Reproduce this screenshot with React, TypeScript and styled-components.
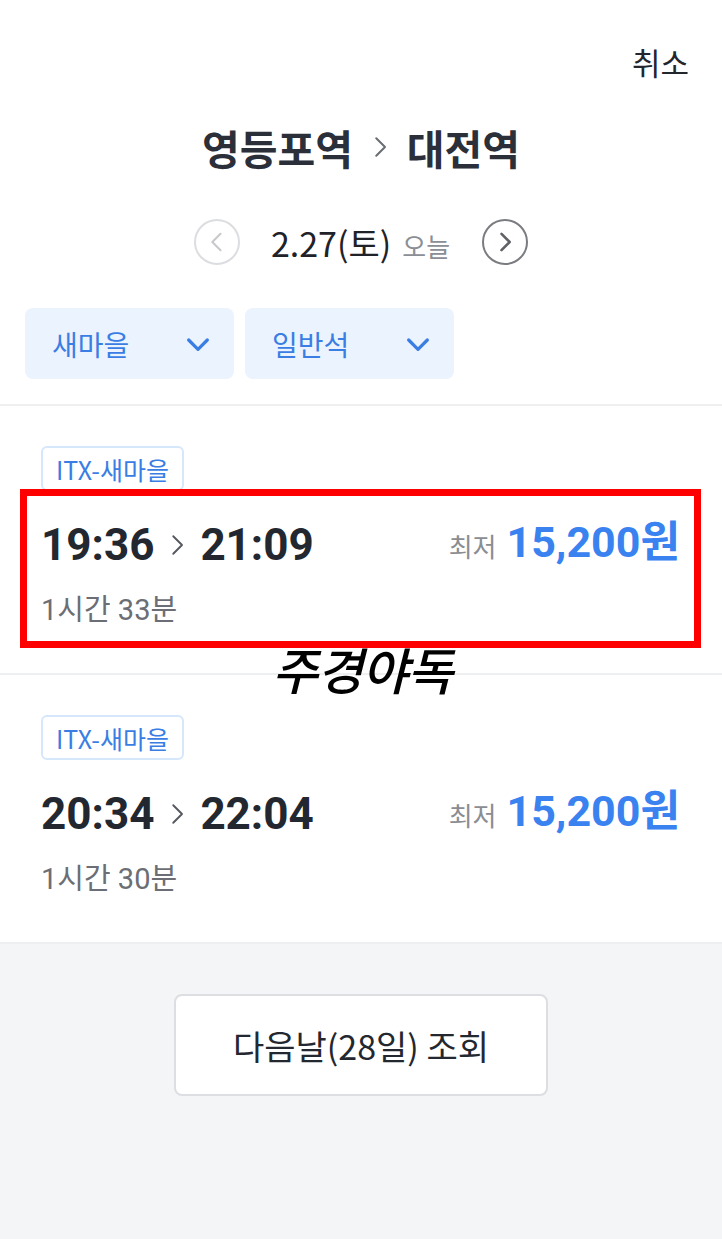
import { FC } from 'react';
import styled, { createGlobalStyle } from 'styled-components';

const GlobalStyle = createGlobalStyle`
  body {
    margin: 0;
    background: #ffffff;
    font-family: 'Noto Sans CJK KR', 'Noto Sans', sans-serif;
    color: #23272f;
  }
`;

type Train = {
  id: string;
  kind: string;
  depart: string;
  arrive: string;
  duration: string;
  price: string;
};

const trains: Train[] = [
  { id: 'a', kind: 'ITX-새마을', depart: '19:36', arrive: '21:09', duration: '1시간 33분', price: '15,200' },
  { id: 'b', kind: 'ITX-새마을', depart: '20:34', arrive: '22:04', duration: '1시간 30분', price: '15,200' },
];

const Page = styled.div`
  width: 722px;
  min-height: 1239px;
  display: flex;
  flex-direction: column;
  background: #ffffff;
`;

const TopBar = styled.div`
  display: flex;
  justify-content: flex-end;
  padding: 42px 33px 0 0;
`;

const CancelButton = styled.button`
  border: none;
  background: none;
  padding: 0;
  font-family: inherit;
  font-size: 31px;
  line-height: 40px;
  color: #23262d;
`;

const Route = styled.h1`
  margin: 37px 0 0;
  display: flex;
  align-items: center;
  justify-content: center;
  gap: 12px;
  font-size: 41px;
  line-height: 56px;
  font-weight: 700;
  color: #2a2f3a;
`;

const DateNav = styled.div`
  margin-top: 44px;
  height: 46px;
  display: flex;
  align-items: center;
  justify-content: center;
`;

const CircleButton = styled.button<{ $active: boolean }>`
  width: 46px;
  height: 46px;
  border-radius: 50%;
  border: 2px solid ${p => (p.$active ? '#7a7c80' : '#dcdde0')};
  background: #ffffff;
  display: flex;
  align-items: center;
  justify-content: center;
  padding: 0;
`;

const DateText = styled.div`
  margin: 0 32px 0 31px;
  display: flex;
  align-items: baseline;
  gap: 11px;
`;

const DateMain = styled.span`
  font-size: 34px;
  color: #1f2228;
`;

const Today = styled.span`
  font-size: 26px;
  color: #8b8e94;
`;

const Filters = styled.div`
  margin-top: 43px;
  padding: 0 25px;
  display: flex;
  gap: 11px;
`;

const Select = styled.button`
  width: 209px;
  height: 71px;
  border: none;
  border-radius: 8px;
  background: #ebf3fe;
  display: flex;
  align-items: center;
  justify-content: space-between;
  padding: 0 20px 0 27px;
  font-family: inherit;
  font-size: 28px;
  color: #3a7ee4;
`;

const ResultList = styled.div`
  margin-top: 25px;
  border-top: 2px solid #eeeff1;
`;

const Card = styled.div`
  position: relative;
  height: 269px;
  box-sizing: border-box;
  padding: 40px 42px 0 41px;
  border-bottom: 2px solid #eeeff1;
`;

const Tag = styled.span`
  display: inline-flex;
  align-items: center;
  height: 45px;
  box-sizing: border-box;
  padding: 0 13px;
  border: 2px solid #d6e6fb;
  border-radius: 6px;
  font-size: 25px;
  color: #3a7ee4;
`;

const Row = styled.div`
  margin-top: 29px;
  height: 50px;
  display: flex;
  align-items: center;
  justify-content: space-between;
`;

const Times = styled.div`
  display: flex;
  align-items: center;
  gap: 8px;
  font-family: Roboto, 'Noto Sans CJK KR', sans-serif;
  font-size: 44px;
  font-weight: 700;
  color: #23272f;
`;

const Price = styled.div`
  display: flex;
  align-items: baseline;
  gap: 10px;
  margin-bottom: 14px;
`;

const PriceLabel = styled.span`
  font-size: 26px;
  color: #8a8d92;
`;

const PriceValue = styled.span`
  font-family: Roboto, 'Noto Sans CJK KR', sans-serif;
  font-size: 43px;
  font-weight: 700;
  color: #3a82f0;
`;

const Duration = styled.div`
  margin-top: 23px;
  font-family: Roboto, 'Noto Sans CJK KR', sans-serif;
  font-size: 29px;
  line-height: 34px;
  color: #6b6e74;
`;

const Highlight = styled.div`
  position: absolute;
  top: 83px;
  left: 20px;
  width: 681px;
  height: 159px;
  box-sizing: border-box;
  border: 7px solid #ff0000;
  pointer-events: none;
`;

const Note = styled.div`
  position: absolute;
  top: 232px;
  left: 272px;
  z-index: 2;
  font-size: 50px;
  line-height: 60px;
  font-style: italic;
  font-weight: 500;
  letter-spacing: -1px;
  color: #000000;
`;

const Footer = styled.div`
  flex: 1;
  background: #f4f5f7;
  display: flex;
  justify-content: center;
  padding-top: 50px;
`;

const NextDayButton = styled.button`
  width: 374px;
  height: 102px;
  border: 2px solid #dcdee2;
  border-radius: 8px;
  background: #ffffff;
  font-family: inherit;
  font-size: 34px;
  color: #23272f;
`;

const Chevron: FC<{ dir: 'left' | 'right' | 'down'; size: number; color: string; width?: number }> = ({
  dir,
  size,
  color,
  width = 2,
}) => {
  const d =
    dir === 'left' ? 'M15 5 L8 12 L15 19' : dir === 'right' ? 'M9 5 L16 12 L9 19' : 'M5 9 L12 16 L19 9';
  return (
    <svg width={size} height={size} viewBox="0 0 24 24" fill="none">
      <path d={d} stroke={color} strokeWidth={width} strokeLinecap="round" strokeLinejoin="round" />
    </svg>
  );
};

const TrainCard: FC<{ train: Train; marked?: boolean }> = ({ train, marked }) => (
  <Card>
    <Tag>{train.kind}</Tag>
    <Row>
      <Times>
        {train.depart}
        <Chevron dir="right" size={30} color="#55585e" width={1.5} />
        {train.arrive}
      </Times>
      <Price>
        <PriceLabel>최저</PriceLabel>
        <PriceValue>{train.price}원</PriceValue>
      </Price>
    </Row>
    <Duration>{train.duration}</Duration>
    {marked && (
      <>
        <Highlight />
        <Note>주경야독</Note>
      </>
    )}
  </Card>
);

export default function App() {
  return (
    <Page>
      <GlobalStyle />
      <TopBar>
        <CancelButton>취소</CancelButton>
      </TopBar>
      <Route>
        영등포역
        <Chevron dir="right" size={30} color="#6a6d73" width={1.6} />
        대전역
      </Route>
      <DateNav>
        <CircleButton $active={false}>
          <Chevron dir="left" size={28} color="#c8c9cc" width={1.8} />
        </CircleButton>
        <DateText>
          <DateMain>2.27(토)</DateMain>
          <Today>오늘</Today>
        </DateText>
        <CircleButton $active>
          <Chevron dir="right" size={28} color="#5f6165" width={2.2} />
        </CircleButton>
      </DateNav>
      <Filters>
        <Select>
          새마을
          <Chevron dir="down" size={32} color="#3a7ee4" width={2.4} />
        </Select>
        <Select>
          일반석
          <Chevron dir="down" size={32} color="#3a7ee4" width={2.4} />
        </Select>
      </Filters>
      <ResultList>
        {trains.map((t, i) => (
          <TrainCard key={t.id} train={t} marked={i === 0} />
        ))}
      </ResultList>
      <Footer>
        <NextDayButton>다음날(28일) 조회</NextDayButton>
      </Footer>
    </Page>
  );
}
